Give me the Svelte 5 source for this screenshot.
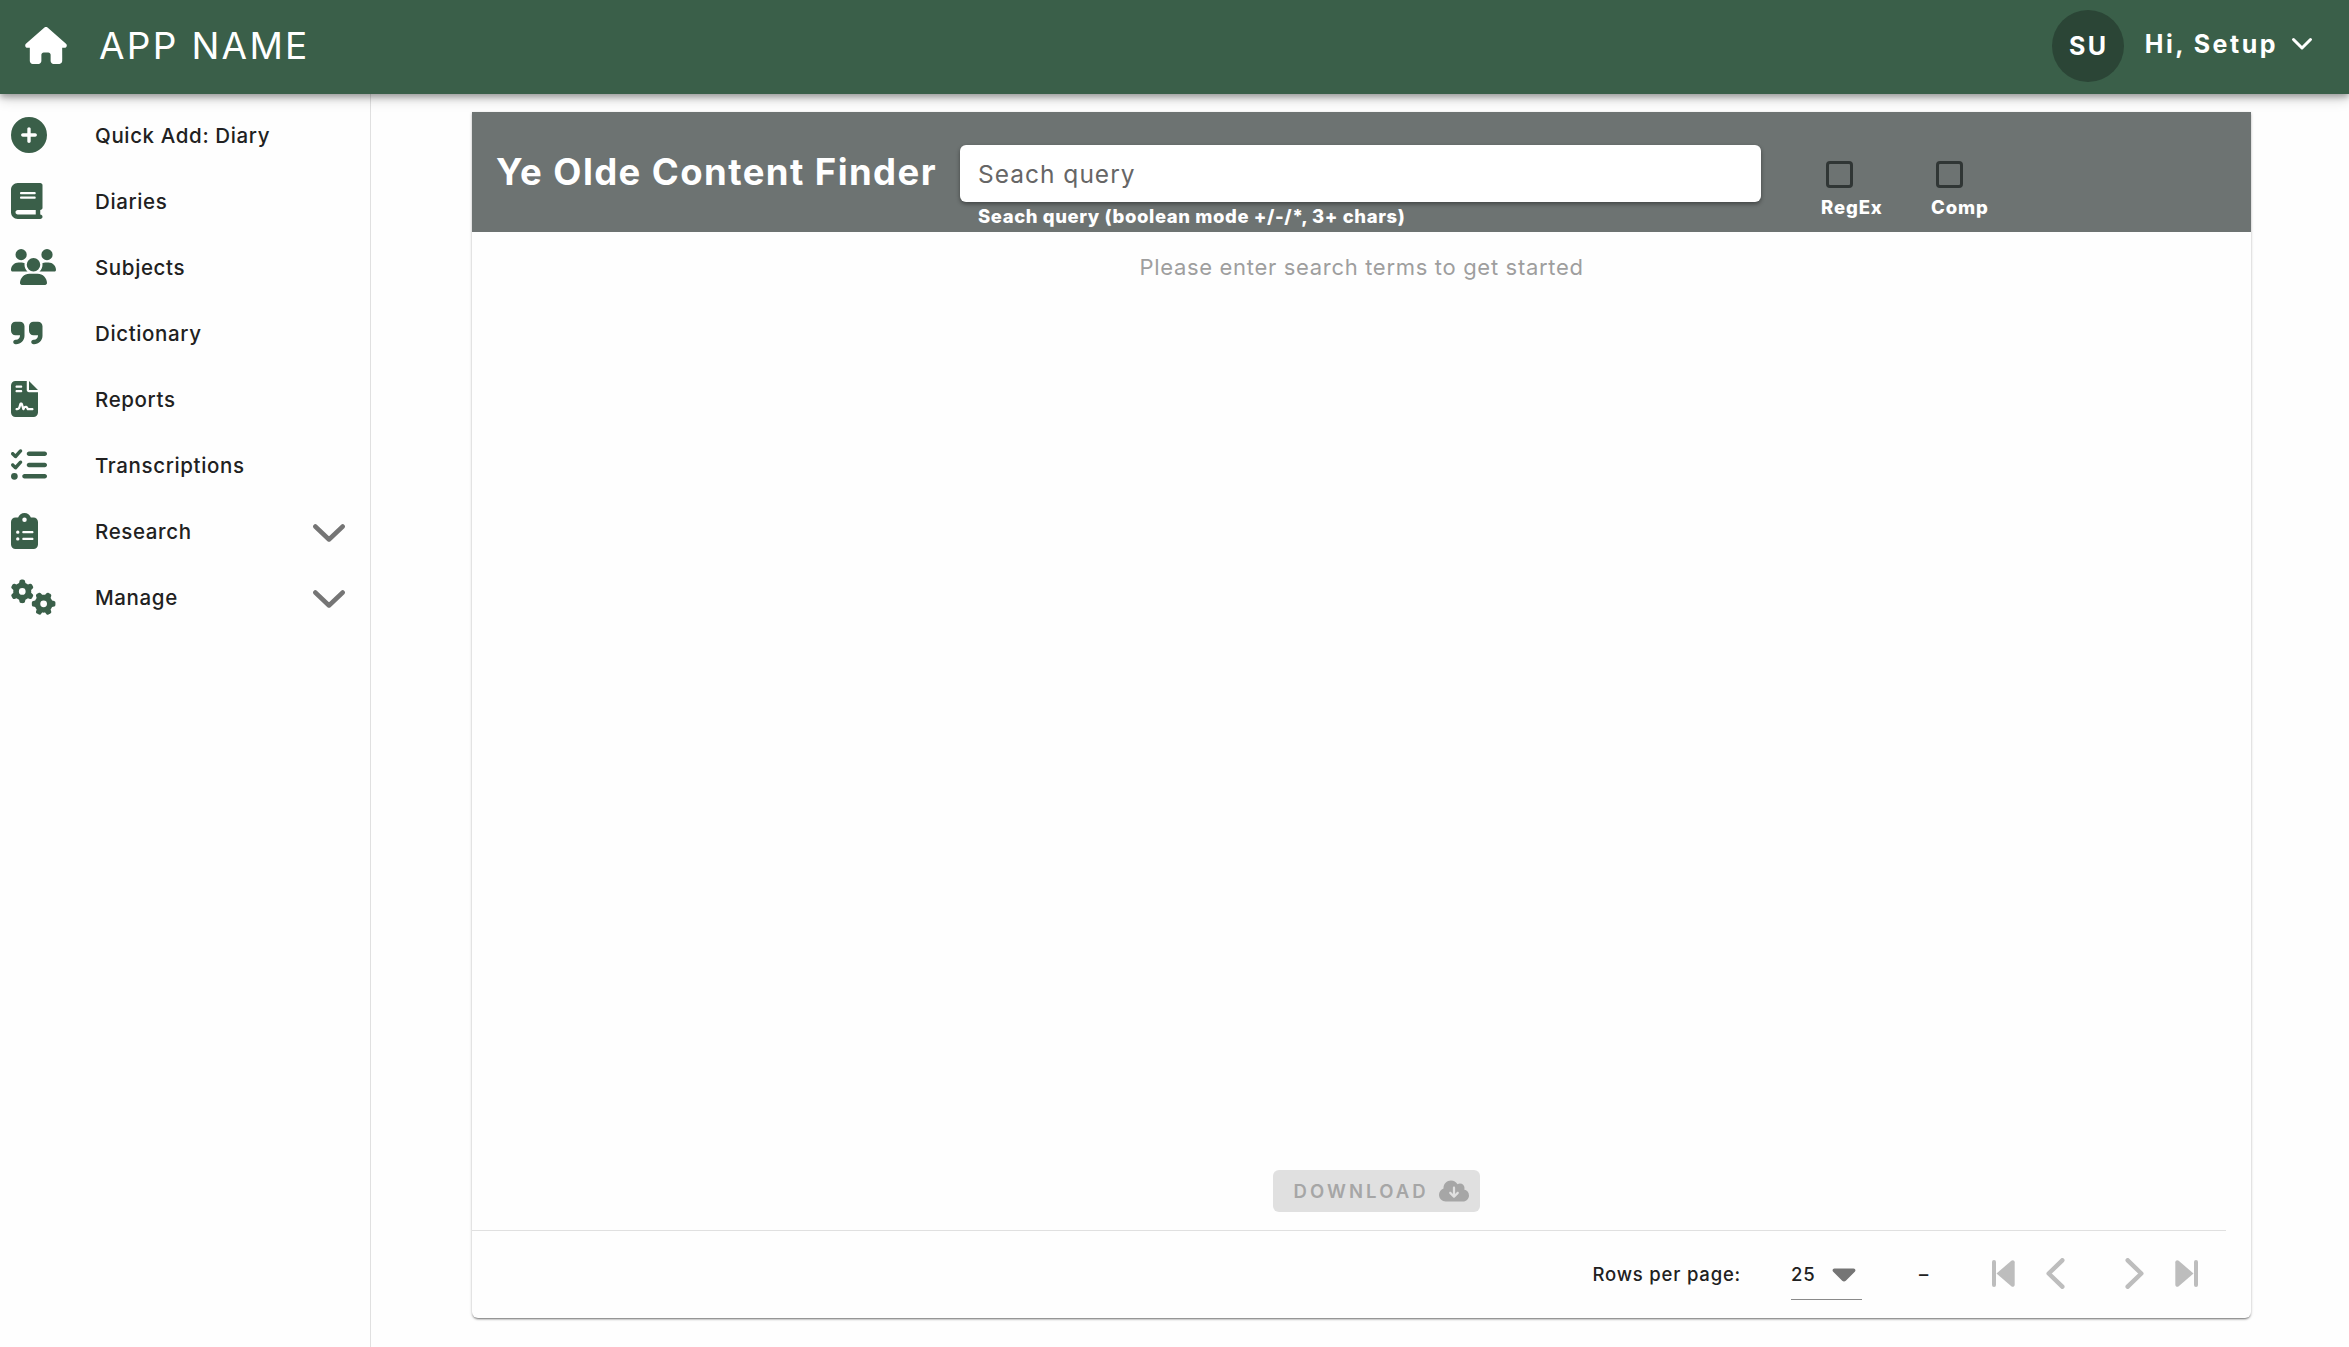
<script>
  const paths = {
    plus: [512, 'M256 512A256 256 0 1 0 256 0a256 256 0 1 0 0 512zM232 344l0-64-64 0c-13.3 0-24-10.7-24-24s10.7-24 24-24l64 0 0-64c0-13.3 10.7-24 24-24s24 10.7 24 24l0 64 64 0c13.3 0 24 10.7 24 24s-10.7 24-24 24l-64 0 0 64c0 13.3-10.7 24-24 24s-24-10.7-24-24z'],
    book: [448, 'M96 0C43 0 0 43 0 96L0 416c0 53 43 96 96 96l288 0 32 0c17.7 0 32-14.3 32-32s-14.3-32-32-32l0-64c17.7 0 32-14.3 32-32l0-320c0-17.7-14.3-32-32-32L384 0 96 0zm0 384l256 0 0 64L96 448c-17.7 0-32-14.3-32-32s14.3-32 32-32zm32-240c0-8.8 7.2-16 16-16l192 0c8.8 0 16 7.2 16 16s-7.2 16-16 16l-192 0c-8.8 0-16-7.2-16-16zm16 48l192 0c8.8 0 16 7.2 16 16s-7.2 16-16 16l-192 0c-8.8 0-16-7.2-16-16s7.2-16 16-16z'],
    users: [640, 'M144 0a80 80 0 1 1 0 160A80 80 0 1 1 144 0zM512 0a80 80 0 1 1 0 160A80 80 0 1 1 512 0zM0 298.7C0 239.8 47.8 192 106.7 192l42.7 0c15.9 0 31 3.5 44.6 9.7c-1.3 7.2-1.9 14.7-1.9 22.3c0 38.2 16.8 72.5 43.3 96c-.2 0-.4 0-.7 0L21.3 320C9.6 320 0 310.4 0 298.7zM405.3 320c-.2 0-.4 0-.7 0c26.6-23.5 43.3-57.8 43.3-96c0-7.6-.7-15-1.9-22.3c13.6-6.3 28.7-9.7 44.6-9.7l42.7 0C592.2 192 640 239.8 640 298.7c0 11.8-9.6 21.3-21.3 21.3l-213.3 0zM224 224a96 96 0 1 1 192 0 96 96 0 1 1 -192 0zM128 485.3C128 411.7 187.7 352 261.3 352l117.3 0C452.3 352 512 411.7 512 485.3c0 14.7-11.9 26.7-26.7 26.7l-330.7 0c-14.7 0-26.7-11.9-26.7-26.7z'],
    quote: [448, 'M448 296c0 66.3-53.7 120-120 120l-8 0c-17.7 0-32-14.3-32-32s14.3-32 32-32l8 0c30.9 0 56-25.1 56-56l0-8-64 0c-35.3 0-64-28.7-64-64l0-64c0-35.3 28.7-64 64-64l64 0c35.3 0 64 28.7 64 64l0 32 0 32 0 72zm-256 0c0 66.3-53.7 120-120 120l-8 0c-17.7 0-32-14.3-32-32s14.3-32 32-32l8 0c30.9 0 56-25.1 56-56l0-8-64 0c-35.3 0-64-28.7-64-64l0-64c0-35.3 28.7-64 64-64l64 0c35.3 0 64 28.7 64 64l0 32 0 32 0 72z'],
    contract: [384, 'M64 0C28.7 0 0 28.7 0 64L0 448c0 35.3 28.7 64 64 64l256 0c35.3 0 64-28.7 64-64l0-288-128 0c-17.7 0-32-14.3-32-32L224 0 64 0zM256 0l0 128 128 0L256 0zM80 64l64 0c8.8 0 16 7.2 16 16s-7.2 16-16 16L80 96c-8.8 0-16-7.2-16-16s7.2-16 16-16zm0 64l64 0c8.8 0 16 7.2 16 16s-7.2 16-16 16l-64 0c-8.8 0-16-7.2-16-16s7.2-16 16-16zm54.2 253.8c-6.1 20.3-24.8 34.2-46 34.2L80 416c-8.8 0-16-7.2-16-16s7.2-16 16-16l8.2 0c7.1 0 13.3-4.6 15.3-11.4l14.9-49.5c3.4-11.3 13.8-19.1 25.6-19.1s22.2 7.7 25.6 19.1l11.6 38.6c7.4-6.2 16.8-9.7 26.8-9.7c15.9 0 30.4 9 37.5 23.2l4.4 8.8 54.1 0c8.8 0 16 7.2 16 16s-7.2 16-16 16l-64 0c-6.1 0-11.6-3.4-14.3-8.8l-8.8-17.7c-1.7-3.4-5.1-5.5-8.8-5.5s-7.2 2.1-8.8 5.5l-8.8 17.7c-2.9 5.9-9.2 9.4-15.7 8.8s-12.1-5.1-13.9-11.3L144 349l-9.8 32.8z'],
    list: [512, 'M152.1 38.2c9.9 8.9 10.7 24 1.8 33.9l-72 80c-4.4 4.9-10.6 7.8-17.2 7.9s-12.9-2.4-17.6-7L7 113C-2.3 103.6-2.3 88.4 7 79s24.6-9.4 33.9 0l22.1 22.1 55.1-61.2c8.9-9.9 24-10.7 33.9-1.8zm0 160c9.9 8.9 10.7 24 1.8 33.9l-72 80c-4.4 4.9-10.6 7.8-17.2 7.9s-12.9-2.4-17.6-7L7 273c-9.4-9.4-9.4-24.6 0-33.9s24.6-9.4 33.9 0l22.1 22.1 55.1-61.2c8.9-9.9 24-10.7 33.9-1.8zM224 96c0-17.7 14.3-32 32-32l224 0c17.7 0 32 14.3 32 32s-14.3 32-32 32l-224 0c-17.7 0-32-14.3-32-32zm0 160c0-17.7 14.3-32 32-32l224 0c17.7 0 32 14.3 32 32s-14.3 32-32 32l-224 0c-17.7 0-32-14.3-32-32zM160 416c0-17.7 14.3-32 32-32l288 0c17.7 0 32 14.3 32 32s-14.3 32-32 32l-288 0c-17.7 0-32-14.3-32-32zM48 368a48 48 0 1 1 0 96 48 48 0 1 1 0-96z'],
    clipboard: [384, 'M192 0c-41.8 0-77.4 26.7-90.5 64L64 64C28.7 64 0 92.7 0 128L0 448c0 35.3 28.7 64 64 64l256 0c35.3 0 64-28.7 64-64l0-320c0-35.3-28.7-64-64-64l-37.5 0C269.4 26.7 233.8 0 192 0zm0 64a32 32 0 1 1 0 64 32 32 0 1 1 0-64zM72 272a24 24 0 1 1 48 0 24 24 0 1 1 -48 0zm104-16l128 0c8.8 0 16 7.2 16 16s-7.2 16-16 16l-128 0c-8.8 0-16-7.2-16-16s7.2-16 16-16zM72 368a24 24 0 1 1 48 0 24 24 0 1 1 -48 0zm88 0c0-8.8 7.2-16 16-16l128 0c8.8 0 16 7.2 16 16s-7.2 16-16 16l-128 0c-8.8 0-16-7.2-16-16z'],
    gears: [640, 'M308.5 135.3c7.1-6.3 9.9-16.2 6.2-25c-2.3-5.3-4.8-10.5-7.6-15.5L304 89.4c-3-5-6.3-9.9-9.8-14.6c-5.7-7.6-15.7-10.1-24.7-7.1l-28.2 9.3c-10.7-8.8-23-16-36.2-20.9L199 27.1c-1.9-9.3-9.1-16.7-18.5-17.8C173.9 8.4 167.2 8 160.4 8l-.7 0c-6.8 0-13.5 .4-20.1 1.2c-9.4 1.1-16.6 8.6-18.5 17.8L115 56.1c-13.3 5-25.5 12.1-36.2 20.9L50.5 67.8c-9-3-19-.5-24.7 7.1c-3.5 4.7-6.8 9.6-9.9 14.6l-3 5.3c-2.8 5-5.3 10.2-7.6 15.6c-3.7 8.7-.9 18.6 6.2 25l22.2 19.8C32.6 161.9 32 168.9 32 176s.6 14.1 1.7 20.9L11.5 216.7c-7.1 6.3-9.9 16.2-6.2 25c2.3 5.3 4.8 10.5 7.6 15.6l3 5.2c3 5.1 6.3 9.9 9.9 14.6c5.7 7.6 15.7 10.1 24.7 7.1l28.2-9.3c10.7 8.8 23 16 36.2 20.9l6.1 29.1c1.9 9.3 9.1 16.7 18.5 17.8c6.7 .8 13.5 1.2 20.4 1.2s13.7-.4 20.4-1.2c9.4-1.1 16.6-8.6 18.5-17.8l6.1-29.1c13.3-5 25.5-12.1 36.2-20.9l28.2 9.3c9 3 19 .5 24.7-7.1c3.5-4.7 6.8-9.5 9.8-14.6l3.1-5.4c2.8-5 5.3-10.2 7.6-15.5c3.7-8.7 .9-18.6-6.2-25l-22.2-19.8c1.1-6.8 1.7-13.8 1.7-20.9s-.6-14.1-1.7-20.9l22.2-19.8zM112 176a48 48 0 1 1 96 0 48 48 0 1 1 -96 0z']
  };

  const items = [
    { label: 'Quick Add: Diary', icon: 'plus' },
    { label: 'Diaries', icon: 'book' },
    { label: 'Subjects', icon: 'users' },
    { label: 'Dictionary', icon: 'quote' },
    { label: 'Reports', icon: 'contract' },
    { label: 'Transcriptions', icon: 'list' },
    { label: 'Research', icon: 'clipboard', expands: true },
    { label: 'Manage', icon: 'gears', expands: true }
  ];
</script>

<div class="app">
  <header class="topbar">
    <svg class="home" viewBox="0 0 576 512"><path d="M575.8 255.5c0 18-15 32.1-32 32.1l-32 0 .7 160.2c0 2.7-.2 5.4-.5 8.1l0 16.2c0 22.1-17.9 40-40 40l-16 0c-1.1 0-2.2 0-3.3-.1c-1.4 .1-2.8 .1-4.2 .1L416 512l-24 0c-22.1 0-40-17.9-40-40l0-24 0-64c0-17.7-14.3-32-32-32l-64 0c-17.7 0-32 14.3-32 32l0 64 0 24c0 22.1-17.9 40-40 40l-24 0-31.9 0c-1.5 0-3-.1-4.5-.2c-1.2 .1-2.4 .2-3.6 .2l-16 0c-22.1 0-40-17.9-40-40l0-112c0-.9 0-1.9 .1-2.8l0-69.7-32 0c-18 0-32-14-32-32.1c0-9 3-17 10-24L266.4 8c7-7 15-8 22-8s15 2 21 7L564.8 231.5c8 7 12 15 11 24z" /></svg>
    <span class="brand">APP NAME</span>
    <span class="avatar">SU</span>
    <span class="greeting">Hi, Setup</span>
    <svg class="greet-chevron" viewBox="0 0 22 14"><path d="M2.5 2.5 11 11l8.5-8.5" /></svg>
  </header>

  <div class="body">
    <nav class="sidebar">
      {#each items as item}
        <a class="item" href="#top">
          <span class="icon">
            <svg viewBox="0 0 {paths[item.icon][0]} 512" height="36" width={(paths[item.icon][0] * 36) / 512}>
              <path d={paths[item.icon][1]} />
              {#if item.icon === 'gears'}
                <path d={paths.gears[1]} transform="translate(464 352) rotate(90) translate(-160 -176)" />
              {/if}
            </svg>
          </span>
          <span class="label">{item.label}</span>
          {#if item.expands}
            <svg class="expand" viewBox="0 0 32 19"><path d="M2.3 2.5 16 15.5l13.7-13" /></svg>
          {/if}
        </a>
      {/each}
    </nav>

    <main class="content">
      <section class="card">
        <div class="card-head">
          <h1>Ye Olde Content Finder</h1>
          <div class="search">
            <div class="field">Seach query</div>
            <div class="hint">Seach query (boolean mode +/-/*, 3+ chars)</div>
          </div>
          <div class="check"><span class="box"></span><span class="check-label">RegEx</span></div>
          <div class="check"><span class="box"></span><span class="check-label">Comp</span></div>
        </div>

        <div class="results"><p>Please enter search terms to get started</p></div>

        <div class="actions">
          <button class="download" disabled>
            <span>DOWNLOAD</span>
            <svg viewBox="0 0 640 512"><path d="M144 480C64.5 480 0 415.5 0 336c0-62.8 40.2-116.2 96.2-135.9c-.1-2.7-.2-5.4-.2-8.1c0-88.4 71.6-160 160-160c59.3 0 111 32.2 138.7 80.2C409.9 102 428.3 96 448 96c53 0 96 43 96 96c0 12.2-2.3 23.8-6.4 34.6C596 238.4 640 290.1 640 352c0 70.7-57.3 128-128 128l-368 0zm79-167l80 80c9.4 9.4 24.6 9.4 33.9 0l80-80c9.4-9.4 9.4-24.6 0-33.9s-24.6-9.4-33.9 0l-39 39L344 184c0-13.3-10.7-24-24-24s-24 10.7-24 24l0 134.1-39-39c-9.4-9.4-24.6-9.4-33.9 0s-9.4 24.6 0 33.9z" /></svg>
          </button>
        </div>

        <footer class="pager">
          <span class="rows">Rows per page:</span>
          <span class="select">
            <span>25</span>
            <svg viewBox="0 0 24 14"><path d="M2.5.5h19c1.8 0 2.6 2 1.3 3.3l-9 9c-1 1-2.6 1-3.6 0l-9-9C-.1 2.5.7.5 2.5.5z" /></svg>
          </span>
          <span class="range">–</span>
          <svg class="edge" viewBox="0 0 23 27"><rect width="4" height="27" rx="2" /><path d="M4.5 13.5 19.3.7c1.3-1.1 3.4-.4 3.4 1.5v22.6c0 1.9-2.1 2.6-3.4 1.5z" /></svg>
          <svg class="step prev" viewBox="0 0 19 31"><path d="M16.3 2.3 2.7 15.5l13.6 13.2" /></svg>
          <svg class="step next" viewBox="0 0 19 31"><path d="M2.7 2.3 16.3 15.5 2.7 28.7" /></svg>
          <svg class="edge last" viewBox="0 0 23 27"><rect x="19" width="4" height="27" rx="2" /><path d="M18.5 13.5 3.7.7C2.4-.4.3.3.3 2.2v22.6c0 1.9 2.1 2.6 3.4 1.5z" /></svg>
        </footer>
      </section>
    </main>
  </div>
</div>

<style>
  :global(body) { margin: 0; background: #fefefe; overflow: hidden; }
  .app { height: 1347px; display: flex; flex-direction: column; font-family: Inter, "Open Sans", sans-serif; color: #212121; }
  .topbar { height: 94px; flex: none; display: flex; align-items: center; box-sizing: border-box; padding: 0 36px 3px 25px; background: #3a5f49; color: #fff; box-shadow: 0 3px 6px rgba(0,0,0,.28), 0 5px 12px rgba(0,0,0,.18); z-index: 1; }
  .home { width: 42px; height: 37px; fill: #fff; }
  .brand { margin-left: 32px; font-size: 37px; letter-spacing: 2.3px; }
  .avatar { margin-left: auto; width: 72px; height: 72px; border-radius: 50%; background: #2b4536; display: flex; align-items: center; justify-content: center; font-size: 25px; font-weight: 700; letter-spacing: 2.4px; text-indent: 2px; }
  .greeting { margin-left: 21px; font-size: 25px; font-weight: 700; letter-spacing: 2.5px; padding-bottom: 3px; }
  .greet-chevron { margin-left: 13px; width: 22px; height: 14px; margin-bottom: 3px; }
  .greet-chevron path { fill: none; stroke: #fff; stroke-width: 3; stroke-linecap: round; stroke-linejoin: round; }
  .body { flex: 1; display: flex; min-height: 0; }
  .sidebar { width: 370px; border-right: 1px solid #e0e0e0; padding-top: 8px; flex: none; }
  .item { height: 66px; display: flex; align-items: center; padding: 0 25px 0 11px; color: inherit; text-decoration: none; }
  .icon { width: 84px; display: flex; fill: #3a5f49; }
  .label { flex: 1; font-size: 20.5px; font-weight: 500; letter-spacing: .63px; padding-top: 1px; }
  .expand { width: 32px; height: 19px; margin-top: 5px; }
  .expand path { fill: none; stroke: #757575; stroke-width: 4.5; stroke-linecap: round; stroke-linejoin: round; }
  .content { flex: 1; padding: 18px 98px 29px 101px; display: flex; }
  .card { flex: 1; display: flex; flex-direction: column; background: #fefefe; border-radius: 0 0 6px 6px; box-shadow: 0 2px 2px -1px rgba(0,0,0,.4), 0 1px 3px rgba(0,0,0,.25); }
  .card-head { height: 120px; display: flex; align-items: flex-start; background: #6d7372; color: #fff; flex: none; }
  h1 { margin: 38px 0 0 24px; width: 464px; font-size: 36.5px; line-height: 44px; font-weight: 700; letter-spacing: 1.42px; white-space: nowrap; }
  .search { width: 801px; padding-top: 33px; }
  .field { height: 57px; border-radius: 6px; background: #fff; color: #666; font-size: 24.5px; line-height: 59px; letter-spacing: 1px; padding-left: 18px; box-shadow: 0 2px 4px rgba(0,0,0,.4); }
  .hint { padding-left: 18px; font-size: 18.5px; line-height: 29px; font-weight: 800; letter-spacing: .59px; white-space: nowrap; }
  .check { margin-left: 60px; display: flex; flex-direction: column; padding-top: 49px; width: 50px; }
  .box { box-sizing: border-box; width: 27px; height: 27px; margin-left: 5px; border: 3px solid #303635; border-radius: 4px; }
  .check-label { font-size: 18.5px; line-height: 24px; margin-top: 7px; font-weight: 800; letter-spacing: .9px; }
  .results { flex: 1; text-align: center; color: #9e9e9e; }
  .results p { margin: 21px 0 0; font-size: 22px; line-height: 28px; letter-spacing: .68px; }
  .actions { display: flex; justify-content: center; height: 60px; margin-right: 25px; padding-left: 54px; border-bottom: 1px solid #e0e0e0; }
  .download { width: 207px; height: 42px; padding: 0 11px 1px 21px; border: 0; border-radius: 6px; background: #e0e0e0; color: #a6a6a6; display: flex; align-items: center; justify-content: space-between; font: 600 18.5px Inter, sans-serif; letter-spacing: 3.1px; }
  .download svg { width: 30px; height: 24px; fill: #a6a6a6; }
  .pager { height: 87px; display: flex; align-items: center; justify-content: flex-end; padding: 0 53px 1px 0; box-sizing: border-box; font-size: 18.5px; font-weight: 500; }
  .rows { letter-spacing: .8px; }
  .select { margin-left: 50px; width: 71px; height: 50px; border-bottom: 1px solid #8a8a8a; display: flex; align-items: center; letter-spacing: .9px; }
  .select svg { margin-left: 16px; margin-top: 2px; width: 24px; height: 14px; fill: #757575; }
  .range { margin-left: 57px; width: 73px; }
  .edge { width: 23px; height: 27px; margin-bottom: 2px; fill: #bdbdbd; }
  .step { width: 19px; height: 31px; margin-left: 31px; margin-bottom: 2px; }
  .step path { fill: none; stroke: #bdbdbd; stroke-width: 4.5; stroke-linecap: round; stroke-linejoin: round; }
  .next { margin-left: 60px; }
  .last { margin-left: 31px; }
</style>
